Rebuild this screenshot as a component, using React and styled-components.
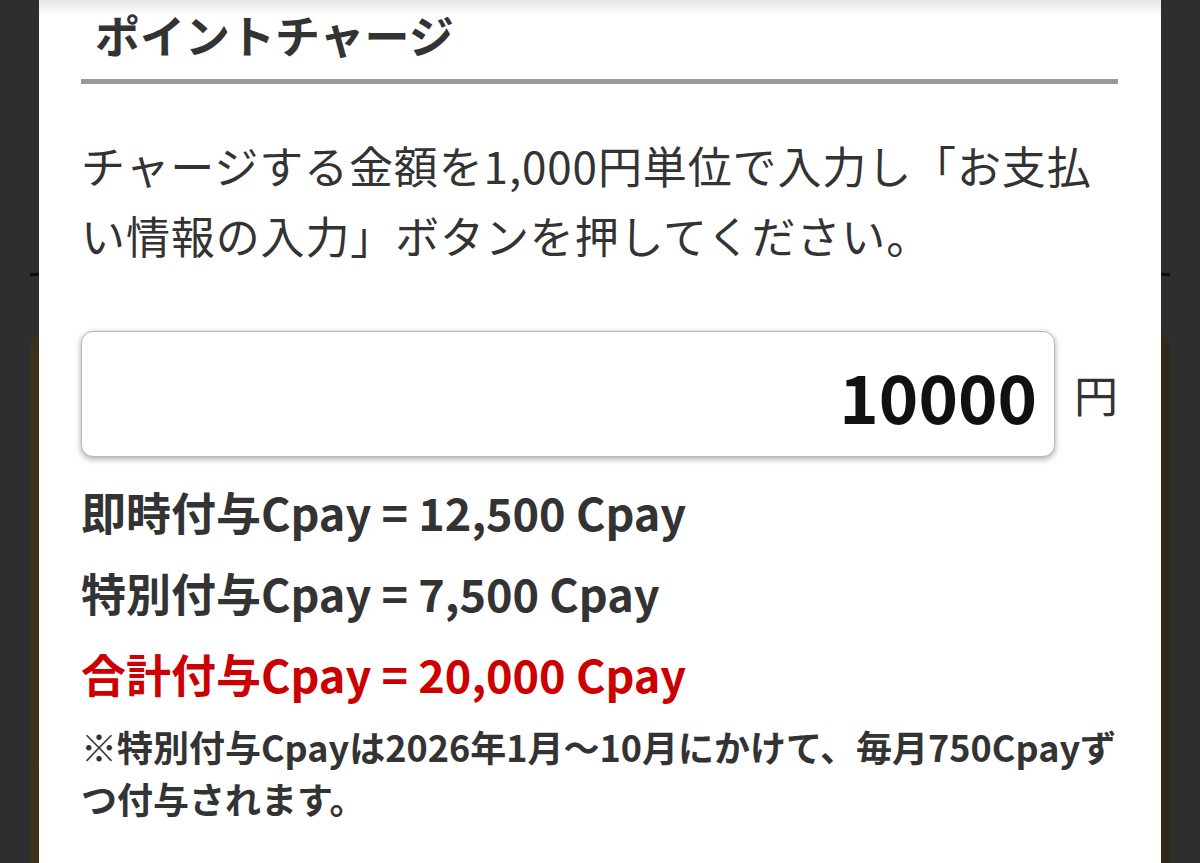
import React from 'react';
import styled, { createGlobalStyle } from 'styled-components';

const GlobalStyle = createGlobalStyle`
  html, body {
    margin: 0;
    padding: 0;
    height: 100%;
    overflow: hidden;
    background: #2e2e2e;
    font-family: "Noto Sans CJK JP", "Noto Sans", sans-serif;
  }
`;

const Page = styled.div`
  position: relative;
  width: 1200px;
  height: 863px;
  overflow: hidden;
  background: #2e2e2e;
`;

const BackLine = styled.div`
  margin: 273px 30px 0;
  height: 3px;
  background: #0e0e0e;
`;

const BackCard = styled.div`
  margin: 58px 30px 0;
  height: 600px;
  border-radius: 14px;
  background: linear-gradient(90deg, #3d311b 0%, #33291a 100%);
`;

const Modal = styled.section`
  position: absolute;
  top: 0;
  left: 39px;
  width: 1122px;
  height: 863px;
  box-sizing: border-box;
  padding: 0 43px 0 42px;
  background: #fff;
  color: #333;

  &::before {
    content: '';
    position: absolute;
    top: 0;
    left: 0;
    right: 0;
    height: 16px;
    background: linear-gradient(180deg, #e6e6e6 0%, rgba(255, 255, 255, 0) 100%);
  }
`;

const Title = styled.h2`
  margin: 0;
  padding: 2px 0 0 14px;
  font-size: 45px;
  line-height: 66px;
  font-weight: 700;
  color: #333;
`;

const Divider = styled.hr`
  margin: 11px 0 0;
  height: 5px;
  border: none;
  background: #999;
`;

const Lead = styled.p`
  margin: 46px 0 0;
  font-size: 44px;
  line-height: 70px;
  font-weight: 400;
  letter-spacing: 0.02em;
  color: #333;
`;

const AmountRow = styled.div`
  display: flex;
  align-items: center;
  gap: 19px;
  margin-top: 61px;
`;

const AmountBox = styled.div`
  width: 976px;
  height: 126px;
  box-sizing: border-box;
  display: flex;
  align-items: center;
  justify-content: flex-end;
  padding-right: 17px;
  border: 1px solid #b8b8b8;
  border-radius: 12px;
  box-shadow: 0 2px 6px rgba(0, 0, 0, 0.35);
  background: #fff;
  font-size: 67px;
  font-weight: 700;
  color: #111;
`;

const Unit = styled.span`
  font-size: 44px;
  color: #333;
`;

const Results = styled.div`
  margin-top: 14px;
`;

const ResultLine = styled.p`
  margin: 0;
  font-size: 45px;
  line-height: 81px;
  font-weight: 700;
  color: ${p => (p.$total ? '#cc0000' : '#333')};
`;

const Note = styled.p`
  margin: 6px 0 0;
  font-size: 36px;
  line-height: 52px;
  font-weight: 700;
  color: #333;
`;

const results = [
  { label: '即時付与Cpay', value: '12,500' },
  { label: '特別付与Cpay', value: '7,500' },
  { label: '合計付与Cpay', value: '20,000', total: true },
];

export default function App() {
  return (
    <>
      <GlobalStyle />
      <Page>
        <BackLine />
        <BackCard />
        <Modal>
          <Title>ポイントチャージ</Title>
          <Divider />
          <Lead>チャージする金額を1,000円単位で入力し「お支払い情報の入力」ボタンを押してください。</Lead>
          <AmountRow>
            <AmountBox>10000</AmountBox>
            <Unit>円</Unit>
          </AmountRow>
          <Results>
            {results.map(r => (
              <ResultLine key={r.label} $total={r.total}>
                {r.label} = {r.value} Cpay
              </ResultLine>
            ))}
          </Results>
          <Note>※特別付与Cpayは2026年1月〜10月にかけて、毎月750Cpayずつ付与されます。</Note>
        </Modal>
      </Page>
    </>
  );
}
